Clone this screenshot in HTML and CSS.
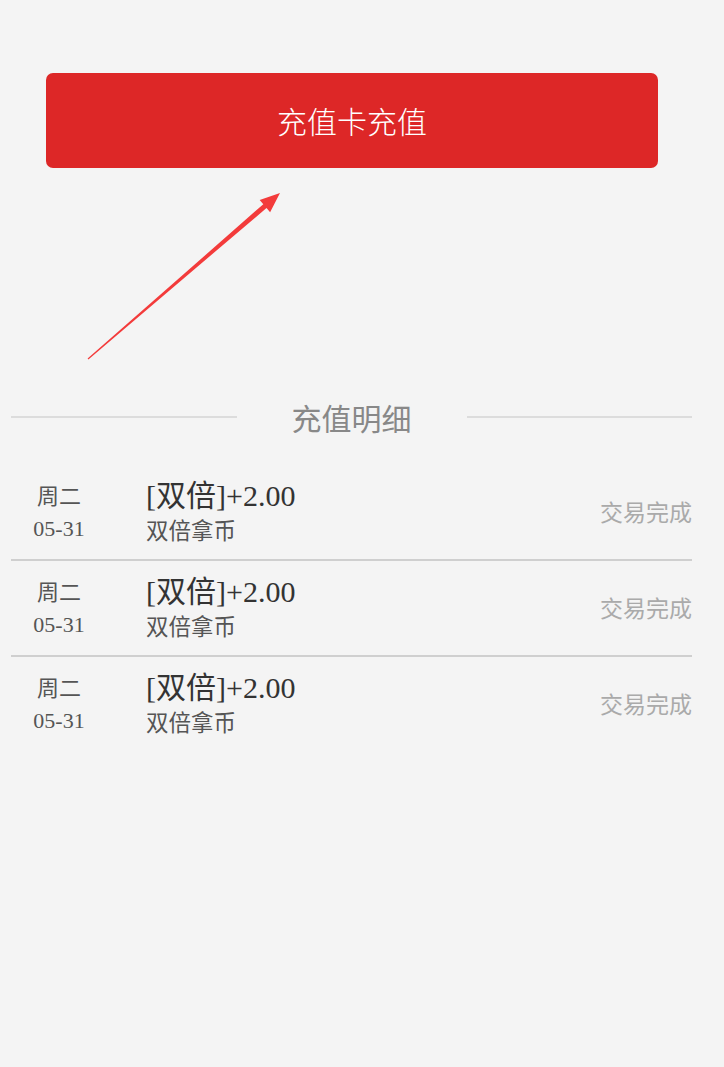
FILE: index.html
```html
<!DOCTYPE html>
<html lang="zh">
<head>
<meta charset="utf-8">
<title>充值</title>
<link rel="stylesheet" href="styles.css">
</head>
<body>
<div class="page">
  <button class="recharge-btn">充值卡充值</button>
  <svg class="arrow" width="724" height="400" viewBox="0 0 724 400" xmlns="http://www.w3.org/2000/svg">
    <polygon fill="#f33b3b" points="87.6,358.6 263.3,204.2 259.7,200.0 280,193 270.1,212.2 266.5,208.0 88.4,359.4"/>
  </svg>
  <div class="divider">
    <span class="divider-line"></span>
    <span class="divider-text">充值明细</span>
    <span class="divider-line"></span>
  </div>
  <ul class="records">
    <li class="record">
      <div class="date"><div>周二</div><div>05-31</div></div>
      <div class="info"><div class="title">[双倍]+2.00</div><div class="sub">双倍拿币</div></div>
      <div class="status">交易完成</div>
    </li>
    <li class="record">
      <div class="date"><div>周二</div><div>05-31</div></div>
      <div class="info"><div class="title">[双倍]+2.00</div><div class="sub">双倍拿币</div></div>
      <div class="status">交易完成</div>
    </li>
    <li class="record">
      <div class="date"><div>周二</div><div>05-31</div></div>
      <div class="info"><div class="title">[双倍]+2.00</div><div class="sub">双倍拿币</div></div>
      <div class="status">交易完成</div>
    </li>
  </ul>
</div>
</body>
</html>
```

FILE: styles.css
```css
html, body {
  margin: 0;
  padding: 0;
  background: #f4f4f4;
  height: 100%;
}
body {
  font-family: "Liberation Serif", "Noto Sans CJK SC", serif;
}
.page {
  position: relative;
  padding: 73px 32px 0 11px;
}
.recharge-btn {
  display: block;
  width: calc(100% - 69px);
  margin: 0 34px 0 35px;
  height: 95px;
  border: none;
  border-radius: 7px;
  background: #dd2727;
  color: #fff;
  font-family: "Noto Sans CJK SC", sans-serif;
  font-size: 30px;
  font-weight: 300;
  line-height: 95px;
  padding: 0;
}
.arrow {
  position: absolute;
  left: 0;
  top: 0;
  pointer-events: none;
}
.divider {
  display: flex;
  align-items: center;
  margin-top: 229px;
  height: 40px;
}
.divider-line {
  flex: 1;
  height: 2px;
  background: #dcdcdc;
}
.divider-text {
  margin: 0 55px;
  font-family: "Noto Sans CJK SC", sans-serif;
  font-size: 30px;
  line-height: 40px;
  color: #888;
}
.records {
  list-style: none;
  margin: 28px 0 0;
  padding: 0;
}
.record {
  display: flex;
  height: 94px;
  border-bottom: 2px solid #cfcfcf;
}
.record:last-child {
  border-bottom: none;
}
.date {
  width: 96px;
  padding-top: 16px;
  text-align: center;
  font-size: 22px;
  line-height: 32px;
  color: #555;
}
.info {
  margin-left: 39px;
  padding-top: 13px;
}
.title {
  font-size: 30px;
  line-height: 36px;
  color: #333;
}
.sub {
  font-size: 22.5px;
  line-height: 36px;
  color: #555;
}
.status {
  margin-left: auto;
  align-self: center;
  font-family: "Noto Sans CJK SC", sans-serif;
  font-size: 23px;
  line-height: 32px;
  color: #aaa;
  padding-bottom: 2px;
}
```
